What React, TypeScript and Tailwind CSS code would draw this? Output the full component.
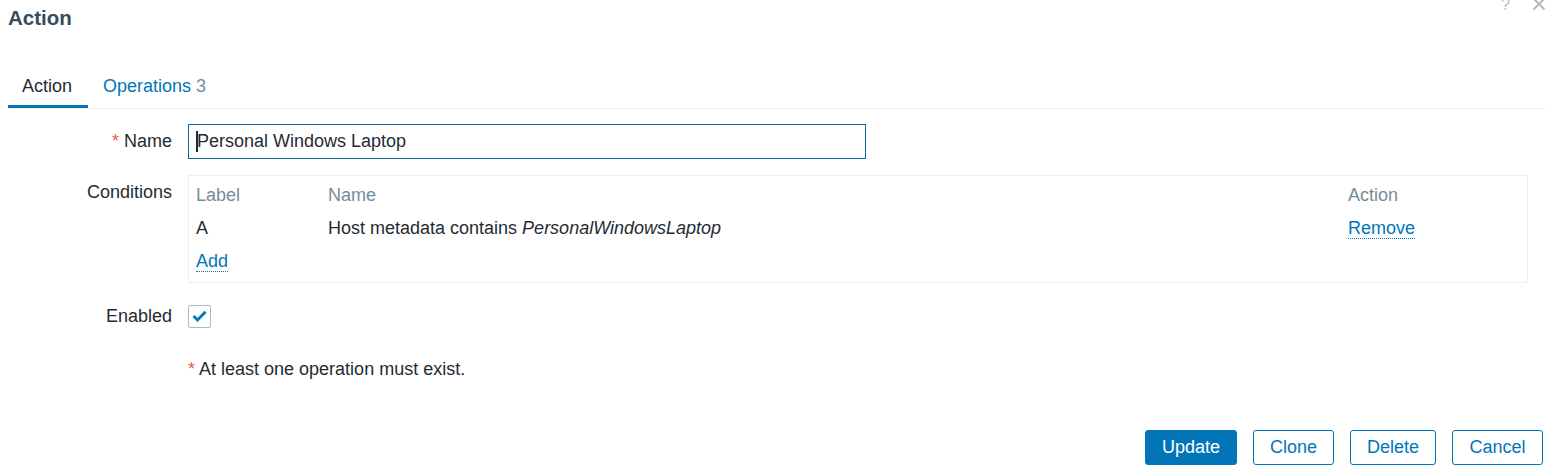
import React from 'react';

const FONT = { fontFamily: '"Liberation Sans", Arial, Helvetica, sans-serif' };

// small helpers
const Label = ({ children, required }: { children: React.ReactNode; required?: boolean }) => (
    <div className="w-[164px] shrink-0 text-right leading-[35px] text-[#1f2c33]">
        {required && <span className="text-[#e45959]">* </span>}
        {children}
    </div>
);

const LinkText = ({ children }: { children: React.ReactNode }) => (
    <span className="inline-block leading-[20px] text-[#0275b8] border-b border-dotted border-[#0275b8]">{children}</span>
);

const Button = ({ children, primary, width }: { children: React.ReactNode; primary?: boolean; width: string }) => (
    <button
        className={
            (primary
                ? 'h-[35px] rounded-[3px] border border-[#0275b8] bg-[#0275b8] text-white leading-[33px] '
                : 'h-[35px] rounded-[3px] border border-[#0275b8] bg-white text-[#0275b8] leading-[33px] ') + width
        }
    >
        {children}
    </button>
);

export default function App() {
    return (
        <div className="relative w-[1550px] h-[472px] bg-white text-[18px] text-[#1f2c33] overflow-hidden" style={FONT}>
            {/* header icons */}
            <div className="absolute top-[-5px] left-[1501px] text-[16px] leading-[20px] text-[#b2bec5]">?</div>
            <svg className="absolute top-[-3px] left-[1532px]" width="14" height="14" viewBox="0 0 14 14">
                <path d="M1.5 1.5 L12.5 12.5 M12.5 1.5 L1.5 12.5" stroke="#b2bec5" strokeWidth="2.2" />
            </svg>

            <h1 className="pl-[8px] pt-[6px] text-[20.5px] leading-[24px] font-bold text-[#384b58]">Action</h1>

            {/* tabs */}
            <div className="mt-[37px] ml-[8px] mr-[5px] flex border-b border-[#ebeef0]">
                <div className="pl-[14px] pr-[16px] pt-[9px] pb-[9px] leading-[20px] border-b-[3px] border-[#0275b8] text-[#1f2c33]">
                    Action
                </div>
                <div className="pl-[15px] pr-[15px] pt-[9px] pb-[9px] leading-[20px] border-b-[3px] border-transparent">
                    <span className="text-[#0275b8]">Operations</span>
                    <span className="text-[#768d99]"> 3</span>
                </div>
            </div>

            {/* form */}
            <div className="pl-[8px] pt-[15px]">
                <div className="flex gap-[16px]">
                    <Label required>Name</Label>
                    <div className="w-[678px] h-[35px] border border-[#0b68a4] pl-[7px] flex items-center">
                        <span className="inline-block w-[2px] h-[21px] bg-[#1f2c33] -mr-[1px]"></span>
                        <span>Personal Windows Laptop</span>
                    </div>
                </div>

                <div className="flex gap-[16px] mt-[16px]">
                    <Label>Conditions</Label>
                    <div className="w-[1340px] border border-[#ebeef0] pl-[7px] pr-[8px] pt-[3px] pb-[4px]">
                        <div className="grid grid-cols-[132px_1fr_171px] h-[33px] items-center text-[#768d99]">
                            <div>Label</div>
                            <div>Name</div>
                            <div>Action</div>
                        </div>
                        <div className="grid grid-cols-[132px_1fr_171px] h-[33px] items-center">
                            <div>A</div>
                            <div>
                                Host metadata contains <i>PersonalWindowsLaptop</i>
                            </div>
                            <div>
                                <LinkText>Remove</LinkText>
                            </div>
                        </div>
                        <div className="h-[33px] flex items-center">
                            <LinkText>Add</LinkText>
                        </div>
                    </div>
                </div>

                <div className="flex gap-[16px] mt-[21px] items-center">
                    <div className="w-[164px] text-right leading-[24px]">Enabled</div>
                    <div className="w-[23px] h-[23px] rounded-[2px] border border-[#acb9c1] flex items-center justify-center">
                        <svg width="15" height="12" viewBox="0 0 15 12">
                            <path d="M1.5 6 L5.5 10 L13.5 1.8" fill="none" stroke="#0275b8" strokeWidth="2.8" />
                        </svg>
                    </div>
                </div>

                <div className="mt-[31px] ml-[180px] leading-[20px]">
                    <span className="text-[#e45959]">* </span>At least one operation must exist.
                </div>
            </div>

            {/* footer buttons */}
            <div className="mt-[51px] pr-[7px] flex justify-end gap-[16px]">
                <Button primary width="w-[92px]">Update</Button>
                <Button width="w-[81px]">Clone</Button>
                <Button width="w-[86px]">Delete</Button>
                <Button width="w-[91px]">Cancel</Button>
            </div>
        </div>
    );
}
